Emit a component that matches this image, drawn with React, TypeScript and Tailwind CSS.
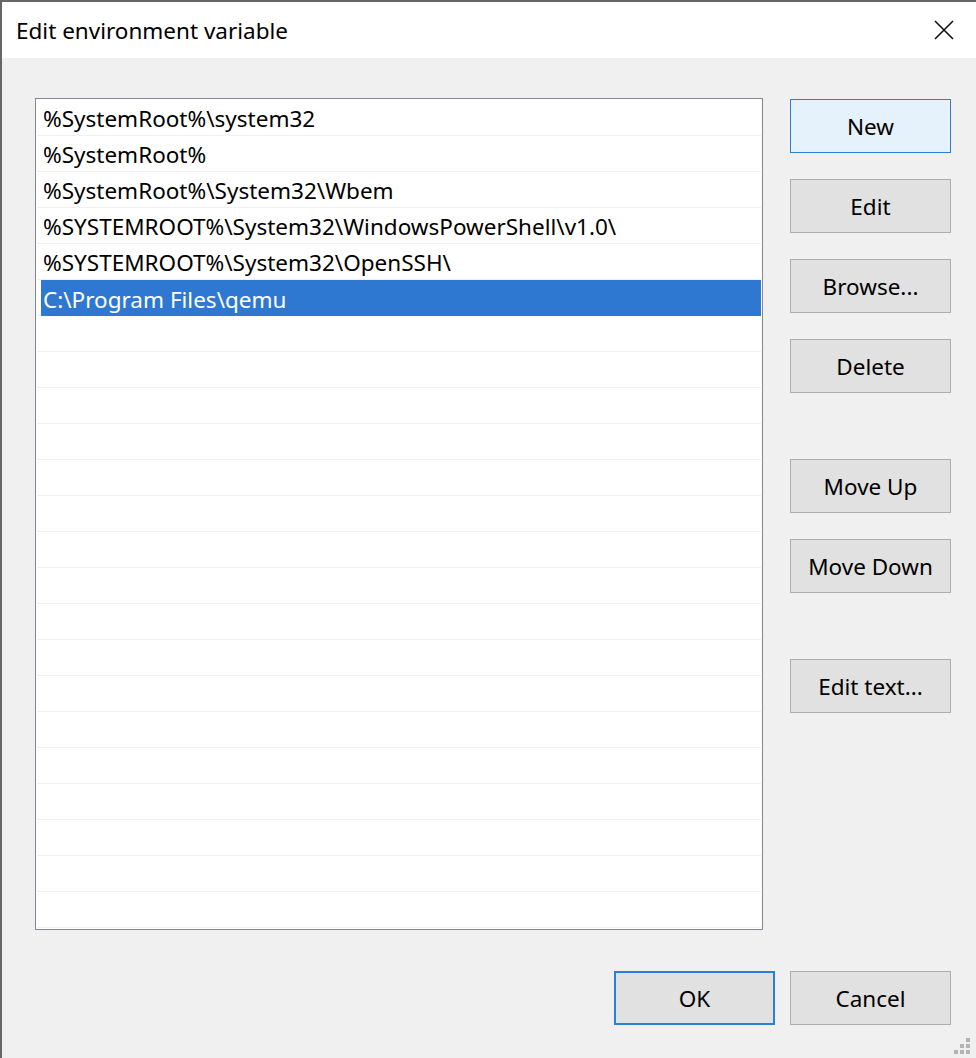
import React from 'react';

const paths = [
  '%SystemRoot%\\system32',
  '%SystemRoot%',
  '%SystemRoot%\\System32\\Wbem',
  '%SYSTEMROOT%\\System32\\WindowsPowerShell\\v1.0\\',
  '%SYSTEMROOT%\\System32\\OpenSSH\\',
  'C:\\Program Files\\qemu',
];

const TOTAL_ROWS = 23;
const SELECTED = 5;

const font = { fontFamily: '"Noto Sans", "Open Sans", sans-serif' };

const DialogButton: React.FC<{ label: string; variant?: 'default' | 'hover' | 'focus'; className?: string }> = ({
  label,
  variant = 'default',
  className = '',
}) => {
  const look =
    variant === 'hover'
      ? 'bg-[#e5f1fb] border border-[#2b7fd8]'
      : variant === 'focus'
      ? 'bg-[#e1e1e1] border-2 border-[#2b7fd8]'
      : 'bg-[#e1e1e1] border border-[#adadad]';
  return (
    <button
      className={`w-[161px] h-[54px] flex items-center justify-center text-[22.5px] leading-none pt-[3px] text-black ${look} ${className}`}
    >
      {label}
    </button>
  );
};

export default function App() {
  const rows = Array.from({ length: TOTAL_ROWS }, (_, i) => paths[i] ?? '');

  return (
    <div
      className="w-[976px] h-[1058px] flex flex-col border-l-2 border-t-2 border-[#666666] overflow-hidden relative"
      style={font}
    >
      {/* title bar */}
      <div className="h-[56px] bg-white flex items-center justify-between pl-[14px] pr-[22px] shrink-0">
        <span className="text-[22.5px] leading-none pt-[2px] text-black">Edit environment variable</span>
        <svg width="20" height="20" viewBox="0 0 20 20">
          <path d="M1 1 L19 19 M19 1 L1 19" stroke="#111" strokeWidth="1.6" fill="none" />
        </svg>
      </div>

      {/* body */}
      <div className="flex-1 bg-[#f0f0f0] flex flex-col pl-[33px] pt-[40px]">
        <div className="flex gap-[27px]">
          <div className="w-[728px] h-[832px] bg-white border border-[#828790] p-[1px] flex flex-col">
            {rows.map((text, i) => (
              <div key={i} className="h-[36px] border-b border-[#f0f0f0] flex shrink-0">
                {i === SELECTED ? (
                  <div className="ml-[4px] flex-1 bg-[#2f78d2] text-white flex items-center pl-[2px] pt-[4px] text-[22.5px] leading-none -mb-[1px]">
                    {text}
                  </div>
                ) : (
                  <div className="flex-1 flex items-center pl-[6px] pt-[4px] text-[22.5px] leading-none text-black">
                    {text}
                  </div>
                )}
              </div>
            ))}
          </div>

          <div className="flex flex-col pt-[1px]">
            <DialogButton label="New" variant="hover" />
            <DialogButton label="Edit" className="mt-[26px]" />
            <DialogButton label="Browse..." className="mt-[26px]" />
            <DialogButton label="Delete" className="mt-[26px]" />
            <DialogButton label="Move Up" className="mt-[66px]" />
            <DialogButton label="Move Down" className="mt-[26px]" />
            <DialogButton label="Edit text..." className="mt-[66px]" />
          </div>
        </div>

        <div className="flex justify-end gap-[15px] pr-[25px] mt-[41px]">
          <DialogButton label="OK" variant="focus" />
          <DialogButton label="Cancel" />
        </div>
      </div>

      {/* size grip */}
      <div className="absolute right-[6px] bottom-[4px] grid grid-cols-3 gap-[2px]">
        <span className="w-[4px] h-[4px]" />
        <span className="w-[4px] h-[4px]" />
        <span className="w-[4px] h-[4px] bg-[#b4b4b4]" />
        <span className="w-[4px] h-[4px]" />
        <span className="w-[4px] h-[4px] bg-[#b4b4b4]" />
        <span className="w-[4px] h-[4px] bg-[#b4b4b4]" />
        <span className="w-[4px] h-[4px] bg-[#b4b4b4]" />
        <span className="w-[4px] h-[4px] bg-[#b4b4b4]" />
        <span className="w-[4px] h-[4px] bg-[#b4b4b4]" />
      </div>
    </div>
  );
}
